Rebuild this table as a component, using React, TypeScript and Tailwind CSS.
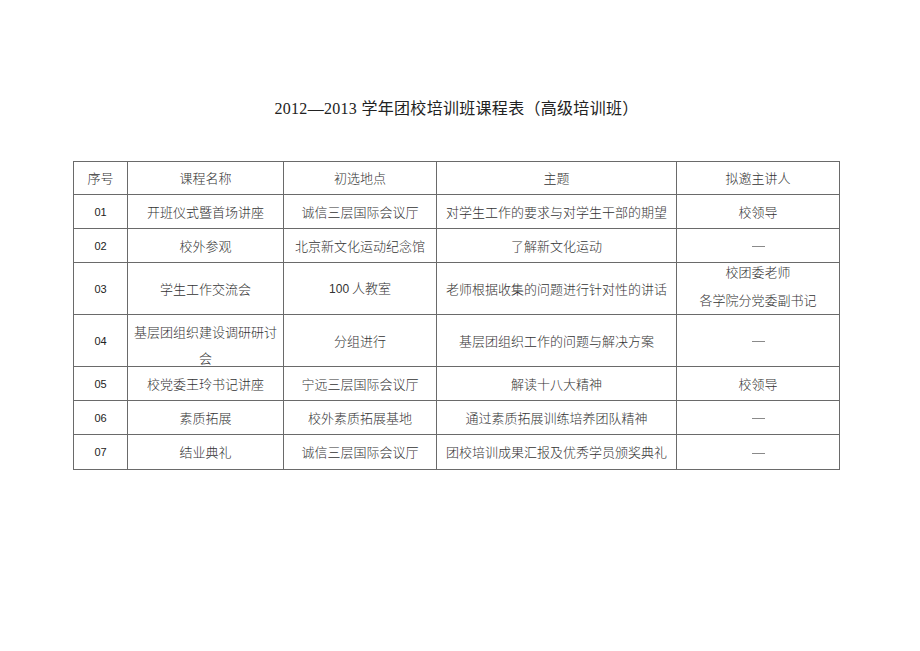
import React from "react";

type Row = { no: string; name: React.ReactNode; place: string; topic: string; speaker: React.ReactNode; h: string; nameTop?: boolean };

const rows: Row[] = [
  { no: "01", name: "开班仪式暨首场讲座", place: "诚信三层国际会议厅", topic: "对学生工作的要求与对学生干部的期望", speaker: "校领导", h: "h-[34px]" },
  { no: "02", name: "校外参观", place: "北京新文化运动纪念馆", topic: "了解新文化运动", speaker: null, h: "h-[34px]" },
  {
    no: "03",
    name: "学生工作交流会",
    place: "100人教室",
    topic: "老师根据收集的问题进行针对性的讲话",
    speaker: (
      <div className="flex flex-col gap-[12px] leading-[16px] pb-[5px]">
        <div>校团委老师</div>
        <div>各学院分党委副书记</div>
      </div>
    ),
    h: "h-[52px]",
  },
  {
    no: "04",
    name: (
      <div className="flex flex-col gap-[12px] leading-[14px] pt-[10px]">
        <div>基层团组织建设调研研讨</div>
        <div>会</div>
      </div>
    ),
    nameTop: true,
    place: "分组进行",
    topic: "基层团组织工作的问题与解决方案",
    speaker: null,
    h: "h-[52px]",
  },
  { no: "05", name: "校党委王玲书记讲座", place: "宁远三层国际会议厅", topic: "解读十八大精神", speaker: "校领导", h: "h-[34px]" },
  { no: "06", name: "素质拓展", place: "校外素质拓展基地", topic: "通过素质拓展训练培养团队精神", speaker: null, h: "h-[34px]" },
  { no: "07", name: "结业典礼", place: "诚信三层国际会议厅", topic: "团校培训成果汇报及优秀学员颁奖典礼", speaker: null, h: "h-[35px]" },
];

const cjk = { fontFamily: '"Noto Sans CJK SC", sans-serif' };

function Dash() {
  return <span className="inline-block w-[13px] h-px bg-[#8a8a8a] align-middle" />;
}

export default function App() {
  return (
    <div className="w-[920px] h-[651px] bg-white relative text-[#333]" style={cjk}>
      <div className="pt-[97px] pl-[73px]">
        <div className="w-[766px] flex justify-center pl-[1px]">
          <div className="text-[16px] leading-[24px] text-[#222] tracking-[0.3px]" style={{ fontFamily: '"Liberation Serif", "Noto Sans CJK SC", serif' }}>
            2012—2013 学年团校培训班课程表（高级培训班）
          </div>
        </div>
        <table className="mt-[40px] w-[766px] table-fixed border-collapse text-[13px] leading-[18px] font-light">
          <colgroup>
            <col className="w-[54px]" />
            <col className="w-[156px]" />
            <col className="w-[153px]" />
            <col className="w-[240px]" />
            <col className="w-[163px]" />
          </colgroup>
          <tbody>
            <tr className="h-[33px]">
              {["序号", "课程名称", "初选地点", "主题", "拟邀主讲人"].map((t) => (
                <td key={t} className="border border-[#6a6a6a] text-center align-middle p-0">
                  {t}
                </td>
              ))}
            </tr>
            {rows.map((r) => (
              <tr key={r.no} className={r.h}>
                <td className="border border-[#6a6a6a] text-center align-middle p-0 text-[11px] text-[#222]" style={{ fontFamily: '"Liberation Sans", sans-serif' }}>
                  {r.no}
                </td>
                <td className={`border border-[#6a6a6a] text-center px-[5px] py-0 whitespace-nowrap ${r.nameTop ? "align-top" : "align-middle"}`}>{r.name}</td>
                <td className="border border-[#6a6a6a] text-center align-middle px-[2px] py-0 whitespace-nowrap">
                  {r.place.startsWith("100") ? (
                    <>
                      <span style={{ fontFamily: '"Liberation Sans", sans-serif' }} className="text-[12px]">100</span> 人教室
                    </>
                  ) : (
                    r.place
                  )}
                </td>
                <td className="border border-[#6a6a6a] text-center align-middle px-[2px] py-0 whitespace-nowrap">{r.topic}</td>
                <td className="border border-[#6a6a6a] text-center align-middle p-0 whitespace-nowrap">{r.speaker ?? <Dash />}</td>
              </tr>
            ))}
          </tbody>
        </table>
      </div>
    </div>
  );
}
